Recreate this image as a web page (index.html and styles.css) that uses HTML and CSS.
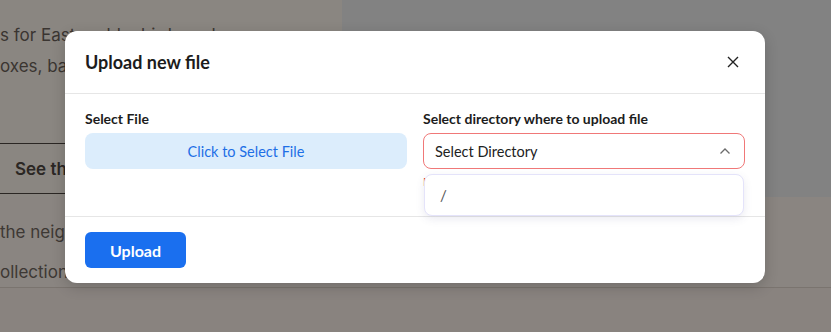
FILE: index.html
```html
<!DOCTYPE html>
<html lang="en">
<head>
<meta charset="utf-8">
<title>Upload new file</title>
<link rel="stylesheet" href="styles.css">
</head>
<body>
<div class="page">
  <div class="top">
    <section class="intro">
      <p class="intro-text">s for Eastern bluebirds and<br>oxes, bat boxes and feeders for every garden</p>
      <div class="see-btn">See the full range</div>
    </section>
    <aside class="side"></aside>
  </div>
  <section class="lower">
    <p class="lower-line">the neighbourhood birds will love their new homes</p>
    <p class="lower-line">ollection Reviews and customer stories</p>
  </section>
  <div class="band"></div>
</div>

<div class="modal" role="dialog" aria-labelledby="modal-title">
  <header class="modal-head">
    <h2 id="modal-title" class="modal-title">Upload new file</h2>
    <button class="close-btn" aria-label="Close">
      <svg width="12" height="12" viewBox="0 0 12 12"><path d="M1 1 L11 11 M11 1 L1 11" stroke="#222" stroke-width="1.4" fill="none"/></svg>
    </button>
  </header>
  <div class="modal-body">
    <div class="field">
      <label class="field-label">Select File</label>
      <button class="file-btn">Click to Select File</button>
    </div>
    <div class="field field-dir">
      <label class="field-label">Select directory where to upload file</label>
      <div class="select">
        <span>Select Directory</span>
        <svg width="12" height="8" viewBox="0 0 12 8"><path d="M1.5 6.5 L6 2 L10.5 6.5" stroke="#6b6b6b" stroke-width="1.3" fill="none"/></svg>
      </div>
      <div class="field-error">Directory is required</div>
      <ul class="dropdown">
        <li class="dropdown-item">/</li>
      </ul>
    </div>
  </div>
  <footer class="modal-foot">
    <button class="upload-btn">Upload</button>
  </footer>
</div>
</body>
</html>
```
FILE: styles.css
```css
* { box-sizing: border-box; }
html, body { margin: 0; padding: 0; }
body {
  width: 831px;
  height: 332px;
  overflow: hidden;
  background: #8a8581;
  font-family: Inter, "Liberation Sans", sans-serif;
  position: relative;
}
.page { display: flex; flex-direction: column; }
.top { display: flex; height: 197px; }
.intro {
  width: 342px;
  background: #8a8681;
  overflow: hidden;
  padding-top: 20px;
}
.intro-text {
  margin: 0;
  font-size: 17px;
  line-height: 31px;
  color: #3a3531;
  white-space: nowrap;
}
.see-btn {
  margin-top: 61px;
  margin-left: -20px;
  width: 420px;
  height: 51px;
  border: 1px solid #2a2623;
  padding-left: 34px;
  display: flex;
  align-items: center;
  font-size: 17px;
  font-weight: 600;
  color: #2b2724;
}
.side { flex: 1; background: #828282; }
.lower {
  height: 91px;
  background: #8a8581;
  border-bottom: 1px solid #7a746f;
  padding-top: 15px;
  overflow: hidden;
}
.lower-line {
  margin: 0;
  font-size: 17px;
  line-height: 40px;
  color: #3d3834;
  white-space: nowrap;
}
.band { height: 44px; background: #89837f; }

.modal {
  position: absolute;
  left: 65px;
  top: 31px;
  width: 700px;
  height: 252px;
  background: #fff;
  border-radius: 12px;
  box-shadow: 0 4px 14px rgba(0,0,0,0.18);
  font-family: Lato, "Noto Sans", sans-serif;
  display: flex;
  flex-direction: column;
}
.modal-head {
  height: 63px;
  border-bottom: 1px solid #e6e6e6;
  display: flex;
  align-items: center;
  justify-content: space-between;
  padding: 0 26px 0 20px;
}
.modal-title {
  margin: 0;
  font-size: 18px;
  font-weight: 700;
  color: #1c1c1c;
  line-height: 24px;
  margin-top: -1px;
}
.close-btn {
  border: 0;
  background: none;
  padding: 0;
  width: 12px;
  height: 12px;
  display: flex;
}
.modal-body {
  height: 123px;
  border-bottom: 1px solid #e6e6e6;
  display: grid;
  grid-template-columns: 1fr 1fr;
  column-gap: 16px;
  padding: 16px 20px 0;
}
.field { display: flex; flex-direction: column; gap: 5px; }
.field-dir { position: relative; }
.field-label {
  font-size: 14px;
  font-weight: 700;
  color: #1c1c1c;
  line-height: 18px;
}
.file-btn {
  height: 36px;
  border: 0;
  border-radius: 8px;
  background: #dcedfc;
  color: #1e6fe6;
  font-family: Lato, "Noto Sans", sans-serif;
  font-size: 14.5px;
}
.select {
  height: 36px;
  border: 1px solid #f07878;
  border-radius: 8px;
  display: flex;
  align-items: center;
  justify-content: space-between;
  padding: 0 13px 0 11px;
  font-size: 14.5px;
  color: #222;
}
.field-error {
  font-size: 12px;
  color: #e53935;
  line-height: 16px;
}
.dropdown {
  position: absolute;
  left: 1px;
  right: 1px;
  top: 64px;
  margin: 0;
  padding: 0;
  list-style: none;
  background: #fff;
  border: 1px solid #e4e3fa;
  border-radius: 8px;
  box-shadow: 0 3px 8px rgba(80,80,140,0.12);
  height: 42px;
}
.dropdown-item {
  padding: 0 15px;
  line-height: 40px;
  font-size: 15px;
  color: #555;
}
.modal-foot {
  flex: 1;
  display: flex;
  align-items: center;
  padding: 0 20px;
}
.upload-btn {
  width: 101px;
  height: 36px;
  border: 0;
  border-radius: 6px;
  background: #1a6fef;
  color: #fff;
  font-family: Lato, "Noto Sans", sans-serif;
  font-size: 16px;
  font-weight: 700;
}
```
